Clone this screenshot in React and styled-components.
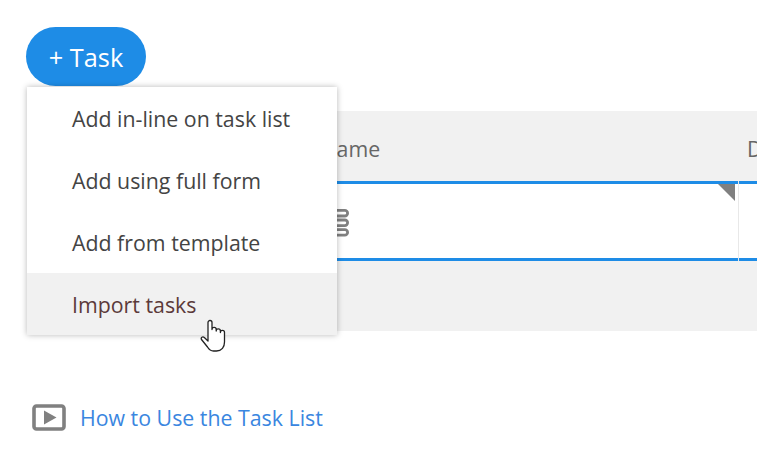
import React from "react";
import styled, { createGlobalStyle } from "styled-components";

const Global = createGlobalStyle`
  html, body { margin: 0; padding: 0; background: #fff; overflow: hidden; }
  body { font-family: "Open Sans", "Liberation Sans", sans-serif; }
`;

const Page = styled.div`
  position: relative;
  width: 757px;
  height: 454px;
  overflow: hidden;
  padding: 27px 0 0 26px;
  box-sizing: border-box;
`;

const AddButton = styled.button`
  display: block;
  width: 120px;
  height: 59px;
  padding: 0;
  border: 0;
  border-radius: 30px;
  background: #1e8ce6;
  color: #fff;
  font: 400 25.3px "Open Sans", sans-serif;
`;

const Table = styled.div`
  display: flex;
  flex-direction: column;
  margin: 25px -26px 0 14px;
  background: #f1f1f1;
`;

const HeaderRow = styled.div`
  height: 70px;
  display: grid;
  grid-template-columns: 699px 1fr;
  align-items: center;
  font-size: 21.33px;
  color: #666;
  padding-top: 5px;
  box-sizing: border-box;
`;

const HeaderCell = styled.div`
  padding-left: ${(p) => p.$inset}px;
  white-space: nowrap;
  overflow: hidden;
`;

const EditRow = styled.div`
  height: 74px;
  display: grid;
  grid-template-columns: 699px 1fr;
  background: #fff;
  border-top: 3px solid #1e8ce6;
  border-bottom: 3px solid #1e8ce6;
`;

const NameCell = styled.div`
  position: relative;
  display: flex;
  align-items: center;
  padding-left: 285px;
  padding-top: 4px;
  border-right: 1px solid #e8e8e8;
  margin-bottom: -3px;
  margin-top: -3px;
`;

const Corner = styled.div`
  position: absolute;
  top: 3px;
  right: 3px;
  width: 0;
  height: 0;
  border-top: 17px solid #808080;
  border-left: 17px solid transparent;
`;

const FooterRow = styled.div`
  height: 70px;
`;

const Menu = styled.ul`
  position: absolute;
  left: 27px;
  top: 87px;
  width: 310px;
  margin: 0;
  padding: 0;
  list-style: none;
  background: #fff;
  box-shadow: 0 0 6px rgba(0, 0, 0, 0.28);
`;

const MenuItem = styled.li`
  height: 62px;
  display: flex;
  align-items: center;
  padding-left: 45px;
  font-size: 21.33px;
  color: ${(p) => (p.$hover ? "#5c3a3a" : "#444")};
  background: ${(p) => (p.$hover ? "#f1f1f1" : "transparent")};
`;

const HandCursor = styled.svg`
  position: absolute;
  left: 200px;
  top: 319px;
`;

const HelpRow = styled.a`
  display: flex;
  align-items: center;
  gap: 14px;
  margin: 72px 0 0 6px;
  color: #3a86e0;
  font-size: 21.33px;
  text-decoration: none;
`;

export default function App() {
  return (
    <Page>
      <Global />
      <AddButton>+ Task</AddButton>
      <Table>
        <HeaderRow>
          <HeaderCell $inset={230}>Task Name</HeaderCell>
          <HeaderCell $inset={8}>Due</HeaderCell>
        </HeaderRow>
        <EditRow>
          <NameCell>
            <svg width="24" height="28" viewBox="0 0 24 28" aria-hidden="true">
              <g fill="none" stroke="#808080" strokeWidth="2.8">
                <rect x="1.4" y="1.4" width="21.2" height="5.6" rx="2.8" />
                <rect x="1.4" y="11" width="21.2" height="5.6" rx="2.8" />
                <rect x="1.4" y="20.6" width="21.2" height="5.6" rx="2.8" />
              </g>
            </svg>
            <Corner />
          </NameCell>
          <div />
        </EditRow>
        <FooterRow />
      </Table>
      <HelpRow href="#">
        <svg width="34" height="27" viewBox="0 0 34 27" aria-hidden="true">
          <rect x="2" y="2" width="30" height="23" rx="2.5" fill="none" stroke="#808080" strokeWidth="3.6" />
          <path d="M12 6.5 L24.5 13.5 L12 20.5 Z" fill="#808080" />
        </svg>
        How to Use the Task List
      </HelpRow>
      <Menu>
        <MenuItem>Add in-line on task list</MenuItem>
        <MenuItem>Add using full form</MenuItem>
        <MenuItem>Add from template</MenuItem>
        <MenuItem $hover>Import tasks</MenuItem>
      </Menu>
      <HandCursor width="27" height="34" viewBox="0 0 27 34" aria-hidden="true">
        <path
          d="M8 13 V3.5 a2 2 0 0 1 4 0 V10.5 a2.1 2.1 0 0 1 4.2 0 V12 a2.1 2.1 0 0 1 4.2 0 V13.5 a2.05 2.05 0 0 1 4.1 0 V23 c0 5 -2.7 9 -8 9 h-3 c-3 0 -4.5 -1.5 -6 -4 L1.5 20.5 c-1 -2 1.2 -3.4 2.8 -2 L8 22 Z"
          fill="#fff"
          stroke="#222"
          strokeWidth="1.3"
          strokeLinejoin="round"
        />
      </HandCursor>
    </Page>
  );
}
